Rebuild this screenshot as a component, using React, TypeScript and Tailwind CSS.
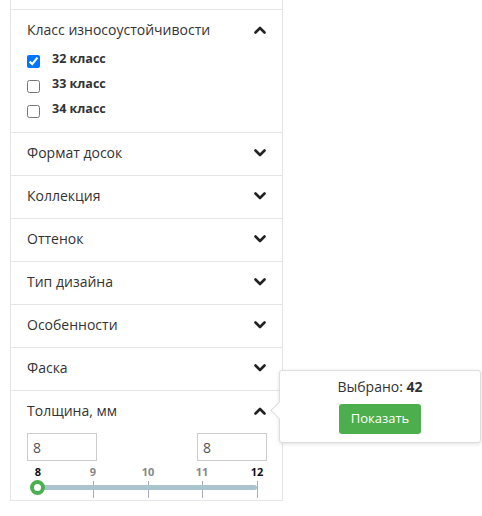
import React, { useState } from "react";

const Chevron = ({ up }: { up?: boolean }) => (
  <svg width="12" height="8" viewBox="0 0 12 8" className="text-[#222]">
    <path
      d={up ? "M1.5 6.5 L6 2 L10.5 6.5" : "M1.5 1.5 L6 6 L10.5 1.5"}
      fill="none"
      stroke="currentColor"
      strokeWidth="2.6"
      strokeLinecap="round"
      strokeLinejoin="round"
    />
  </svg>
);

const Row = ({ title, up }: { title: string; up?: boolean }) => (
  <div className="flex h-[42px] items-center justify-between pb-[3px] pl-[16px] pr-[16px]">
    <span className="text-[14px] text-[#333]">{title}</span>
    <Chevron up={up} />
  </div>
);

const App = () => {
  const [checked, setChecked] = useState<string[]>(["32"]);
  const toggle = (v: string) =>
    setChecked((c) => (c.includes(v) ? c.filter((x) => x !== v) : [...c, v]));

  const ticks = [
    { v: "8", x: 0, bold: true },
    { v: "9", x: 55 },
    { v: "10", x: 110 },
    { v: "11", x: 164 },
    { v: "12", x: 219, bold: true },
  ];

  return (
    <div
      className="relative h-[516px] w-[482px] overflow-hidden bg-white"
      style={{ fontFamily: "'Open Sans', 'Liberation Sans', sans-serif" }}
    >
      <div className="ml-[10px] w-[273px] border-x border-[#e5e5e5]">
        <div className="h-[9px]" />
        <div className="border-t border-[#e5e5e5]">
          <Row title="Класс износоустойчивости" up />
          <div className="flex flex-col pb-[5px] pl-[16px]">
            {["32", "33", "34"].map((v) => (
              <label key={v} className="flex h-[25px] items-start">
                <input
                  type="checkbox"
                  checked={checked.includes(v)}
                  onChange={() => toggle(v)}
                  className="m-0 mt-[3px] h-[13px] w-[13px]"
                />
                <span className="ml-[12px] -mt-[2px] text-[12.5px] font-bold text-[#333]">
                  {v} класс
                </span>
              </label>
            ))}
          </div>
        </div>
        {["Формат досок", "Коллекция", "Оттенок", "Тип дизайна", "Особенности", "Фаска"].map(
          (t) => (
            <div key={t} className="border-t border-[#e5e5e5]">
              <Row title={t} />
            </div>
          )
        )}
        <div className="border-y border-[#e5e5e5]">
          <Row title="Толщина, мм" up />
          <div className="px-[16px] pb-[3px]">
            <div className="flex justify-between">
              <input
                defaultValue="8"
                className="h-[28px] w-[70px] border border-[#ccc] px-[5px] text-[14px] text-[#555] outline-none"
              />
              <input
                defaultValue="8"
                className="mr-[-1px] h-[28px] w-[70px] border border-[#ccc] px-[5px] text-[14px] text-[#555] outline-none"
              />
            </div>
            <div className="relative mt-[2px] h-[34px]">
              {ticks.map((t) => (
                <div key={t.v}>
                  <span
                    className={`absolute top-[1px] -translate-x-1/2 text-[11px] font-bold ${
                      t.bold ? "text-[#111]" : "text-[#888]"
                    }`}
                    style={{ left: 11 + t.x }}
                  >
                    {t.v}
                  </span>
                  {t.x > 0 && (
                    <span
                      className="absolute top-[18px] h-[17px] w-px bg-[#aab]"
                      style={{ left: 11 + t.x }}
                    />
                  )}
                </div>
              ))}
              <div className="absolute left-[11px] top-[22px] h-[5px] w-[219px] rounded-sm bg-[#a9c4cc]" />
              <div className="absolute left-[3px] top-[17px] h-[15px] w-[15px] rounded-full border-[4px] border-[#4caf50] bg-white" />
            </div>
          </div>
        </div>
      </div>

      <div className="absolute left-[279px] top-[370px] h-[73px] w-[202px] rounded-[3px] border border-[#ddd] bg-white shadow-[0_1px_4px_rgba(0,0,0,0.12)]">
        <div className="absolute left-[-7px] top-[33px] h-[13px] w-[13px] rotate-45 border-b border-l border-[#ddd] bg-white" />
        <div className="relative flex w-full flex-col items-center pt-[5px]">
          <div className="text-[14px] text-[#333]">
            Выбрано: <b>42</b>
          </div>
          <button className="mt-[7px] h-[30px] rounded-[3px] bg-[#4cae4c] px-[12px] text-[13px] text-white">
            Показать
          </button>
        </div>
      </div>
    </div>
  );
};

export default App;
